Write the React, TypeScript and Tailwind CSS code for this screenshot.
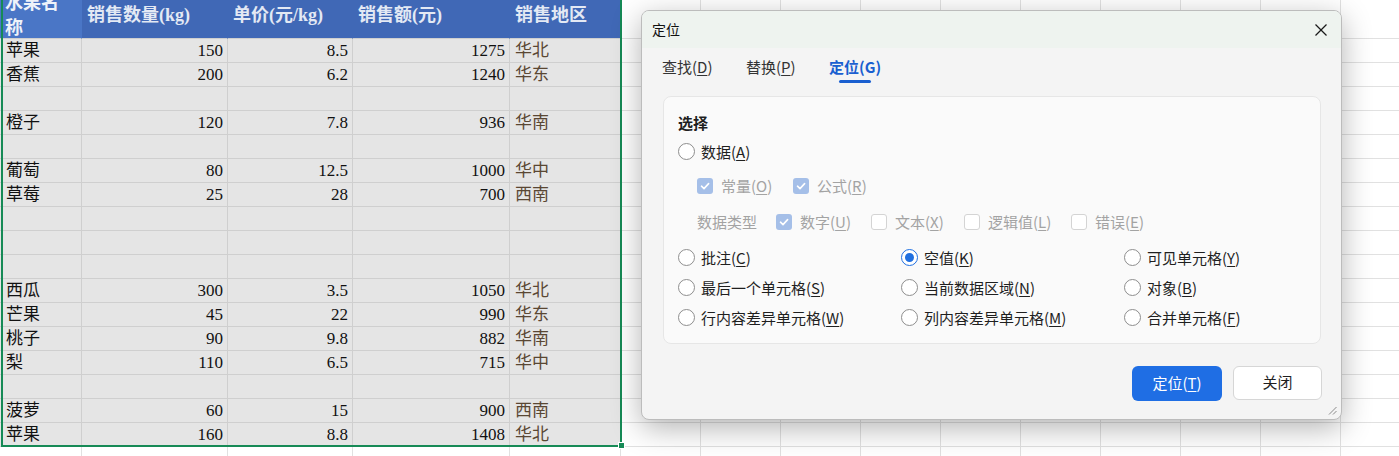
import React from "react";

type Row = [string, string, string, string, string] | null;

const rows: Row[] = [
  ["苹果", "150", "8.5", "1275", "华北"],
  ["香蕉", "200", "6.2", "1240", "华东"],
  null,
  ["橙子", "120", "7.8", "936", "华南"],
  null,
  ["葡萄", "80", "12.5", "1000", "华中"],
  ["草莓", "25", "28", "700", "西南"],
  null,
  null,
  null,
  ["西瓜", "300", "3.5", "1050", "华北"],
  ["芒果", "45", "22", "990", "华东"],
  ["桃子", "90", "9.8", "882", "华南"],
  ["梨", "110", "6.5", "715", "华中"],
  null,
  ["菠萝", "60", "15", "900", "西南"],
  ["苹果", "160", "8.8", "1408", "华北"],
];

const headers = ["水果名称", "销售数量(kg)", "单价(元/kg)", "销售额(元)", "销售地区"];
const EXTRA = 10;
const sheetFont = { fontFamily: '"Liberation Serif", "Noto Sans CJK SC", serif' };
const uiFont = { fontFamily: '"Noto Sans CJK SC", "Noto Sans", sans-serif' };

function Acc({ t }: { t: string }) {
  return (
    <>
      (<span className="underline underline-offset-[2px] decoration-1">{t}</span>)
    </>
  );
}

function Radio({ label, acc, checked = false }: { label: string; acc: string; checked?: boolean }) {
  return (
    <div className="flex items-center h-[22px]">
      <span
        className={
          checked
            ? "w-[17px] h-[17px] rounded-full border-[1.5px] border-[#1f6fe0] bg-white flex items-center justify-center shrink-0"
            : "w-[17px] h-[17px] rounded-full border border-[#8e8e8e] bg-white flex items-center justify-center shrink-0"
        }
      >
        {checked && <span className="w-[9px] h-[9px] rounded-full bg-[#1f6fe0]" />}
      </span>
      <span className="ml-[6px] text-[15px] leading-[22px] text-[#1f1f1f] whitespace-nowrap">
        {label}
        <Acc t={acc} />
      </span>
    </div>
  );
}

function Check({ label, acc, checked = false }: { label: string; acc: string; checked?: boolean }) {
  return (
    <div className="flex items-center h-[22px]">
      {checked ? (
        <span className="w-[16px] h-[16px] rounded-[3px] bg-[#a5bfe8] flex items-center justify-center shrink-0">
          <svg width="12" height="12" viewBox="0 0 12 12">
            <polyline points="2.5,6.2 5,8.6 9.6,3.6" fill="none" stroke="white" strokeWidth="1.6" strokeLinecap="round" strokeLinejoin="round" />
          </svg>
        </span>
      ) : (
        <span className="w-[16px] h-[16px] rounded-[3px] border border-[#d4d4d4] bg-white shrink-0" />
      )}
      <span className="ml-[8px] text-[15px] leading-[22px] text-[#a3a3a3] whitespace-nowrap">
        {label}
        <Acc t={acc} />
      </span>
    </div>
  );
}

function Sheet() {
  const cells: React.ReactNode[] = [];
  headers.forEach((h, c) => {
    cells.push(
      <div
        key={`h${c}`}
        className={
          c === 0
            ? "h-[46px] bg-[#4a76c6] border-r border-r-[#4a76c6] border-b border-b-[#cfcfcf] flex flex-col justify-center pl-[5px] text-[18px] leading-[25px] font-bold text-[#eef2f9] whitespace-nowrap overflow-hidden"
            : "h-[46px] bg-[#4068b6] border-r border-r-[#4068b6] border-b border-b-[#cfcfcf] flex flex-col justify-center pl-[5px] text-[18px] leading-[25px] font-bold text-[#e3e9f4] whitespace-nowrap overflow-hidden"
        }
      >
        {c === 0 ? (
          <>
            <span>水果名</span>
            <span>称</span>
          </>
        ) : (
          <span>{h}</span>
        )}
      </div>
    );
  });
  for (let e = 0; e < EXTRA; e++) {
    cells.push(<div key={`he${e}`} className="h-[46px] bg-white border-r border-b border-[#e1e1e1]" />);
  }
  rows.forEach((r, ri) => {
    for (let c = 0; c < 5; c++) {
      const v = r ? r[c] : "";
      const num = c >= 1 && c <= 3;
      cells.push(
        <div
          key={`r${ri}c${c}`}
          className={
            num
              ? "h-[24px] bg-[#e5e5e5] border-r border-b border-[#cfcfcf] flex items-center justify-end pr-[4px] text-[17px] text-[#111] whitespace-nowrap"
              : c === 4
              ? "h-[24px] bg-[#e5e5e5] border-r border-b border-[#cfcfcf] flex items-center pl-[5px] text-[17px] text-[#5a4733] whitespace-nowrap"
              : "h-[24px] bg-[#e5e5e5] border-r border-b border-[#cfcfcf] flex items-center pl-[6px] text-[17px] text-[#111] whitespace-nowrap"
          }
        >
          {v}
        </div>
      );
    }
    for (let e = 0; e < EXTRA; e++) {
      cells.push(<div key={`r${ri}e${e}`} className="h-[24px] bg-white border-r border-b border-[#e1e1e1]" />);
    }
  });
  for (let k = 0; k < 2; k++) {
    for (let c = 0; c < 5 + EXTRA; c++) {
      cells.push(<div key={`b${k}c${c}`} className="h-[24px] bg-white border-r border-b border-[#e1e1e1]" />);
    }
  }
  return (
    <div
      className="-mt-[7px] grid grid-cols-[82px_146px_125px_157px_111px_repeat(10,80px)] w-[1421px]"
      style={sheetFont}
    >
      {cells}
    </div>
  );
}

function Dialog() {
  return (
    <div
      className="absolute left-[641px] top-[10px] w-[701px] h-[410px] rounded-[8px] border border-[#bcbcbc] bg-[#f4f4f4] shadow-[0_8px_30px_rgba(0,0,0,0.30)] flex flex-col overflow-hidden"
      style={uiFont}
    >
      <div className="h-[37px] shrink-0 bg-[#eef3ef] flex items-center justify-between pl-[10px] pr-[14px]">
        <span className="text-[14px] text-[#111]">定位</span>
        <svg width="12" height="12" viewBox="0 0 12 12">
          <line x1="0.5" y1="0.5" x2="11.5" y2="11.5" stroke="#1a1a1a" strokeWidth="1.2" />
          <line x1="11.5" y1="0.5" x2="0.5" y2="11.5" stroke="#1a1a1a" strokeWidth="1.2" />
        </svg>
      </div>

      <div className="flex pl-[20px] pt-[8px]">
        <div className="w-[84px] flex flex-col items-start">
          <span className="text-[15px] leading-[22px] text-[#333]">
            查找<Acc t="D" />
          </span>
        </div>
        <div className="w-[83px] flex flex-col items-start">
          <span className="text-[15px] leading-[22px] text-[#333]">
            替换<Acc t="P" />
          </span>
        </div>
        <div className="inline-flex flex-col items-center">
          <span className="text-[15px] leading-[22px] text-[#1a5fd0] font-bold">定位(G)</span>
          <span className="mt-[2px] w-[32px] h-[2.5px] rounded-full bg-[#1a5fd0]" />
        </div>
      </div>

      <div className="mt-[13px] ml-[21px] mr-[20px] rounded-[8px] border border-[#e6e6e6] bg-[#fafafa] pl-[14px] pt-[15px] pb-[14px]">
        <div className="text-[15px] leading-[22px] font-bold text-[#1f1f1f]">选择</div>
        <div className="mt-[7px]">
          <Radio label="数据" acc="A" />
        </div>
        <div className="mt-[12px] ml-[19px] flex">
          <div className="w-[96px]">
            <Check label="常量" acc="O" checked />
          </div>
          <Check label="公式" acc="R" checked />
        </div>
        <div className="mt-[14px] ml-[19px] flex items-center">
          <span className="w-[79px] text-[15px] leading-[22px] text-[#a3a3a3]">数据类型</span>
          <div className="w-[95px]">
            <Check label="数字" acc="U" checked />
          </div>
          <div className="w-[93px]">
            <Check label="文本" acc="X" />
          </div>
          <div className="w-[107px]">
            <Check label="逻辑值" acc="L" />
          </div>
          <Check label="错误" acc="E" />
        </div>
        <div className="mt-[14px] grid grid-cols-[223px_223px_1fr] gap-y-[8px]">
          <Radio label="批注" acc="C" />
          <Radio label="空值" acc="K" checked />
          <Radio label="可见单元格" acc="Y" />
          <Radio label="最后一个单元格" acc="S" />
          <Radio label="当前数据区域" acc="N" />
          <Radio label="对象" acc="B" />
          <Radio label="行内容差异单元格" acc="W" />
          <Radio label="列内容差异单元格" acc="M" />
          <Radio label="合并单元格" acc="F" />
        </div>
      </div>

      <div className="mt-[22px] flex justify-end pr-[19px] gap-[11px]">
        <div className="w-[90px] h-[35px] rounded-[6px] bg-[#1f6ee4] flex items-center justify-center text-[15px] text-white">
          定位<Acc t="T" />
        </div>
        <div className="w-[89px] h-[34px] rounded-[6px] bg-white border border-[#d6d6d6] flex items-center justify-center text-[15px] text-[#1f1f1f]">
          关闭
        </div>
      </div>

      <svg className="absolute right-[4px] bottom-[4px]" width="9" height="9" viewBox="0 0 9 9">
        <line x1="8.5" y1="1" x2="1" y2="8.5" stroke="#8a8a8a" strokeWidth="1" />
        <line x1="8.5" y1="5" x2="5" y2="8.5" stroke="#8a8a8a" strokeWidth="1" />
      </svg>
    </div>
  );
}

export default function App() {
  return (
    <div className="relative w-[1399px] h-[456px] overflow-hidden bg-white">
      <Sheet />
      <div className="absolute left-[1px] top-[-10px] w-[621px] h-[457px] border-2 border-[#168a56] pointer-events-none" />
      <div className="absolute left-[618px] top-[442px] w-[7px] h-[7px] bg-[#168a56] border border-white" />
      <Dialog />
    </div>
  );
}
